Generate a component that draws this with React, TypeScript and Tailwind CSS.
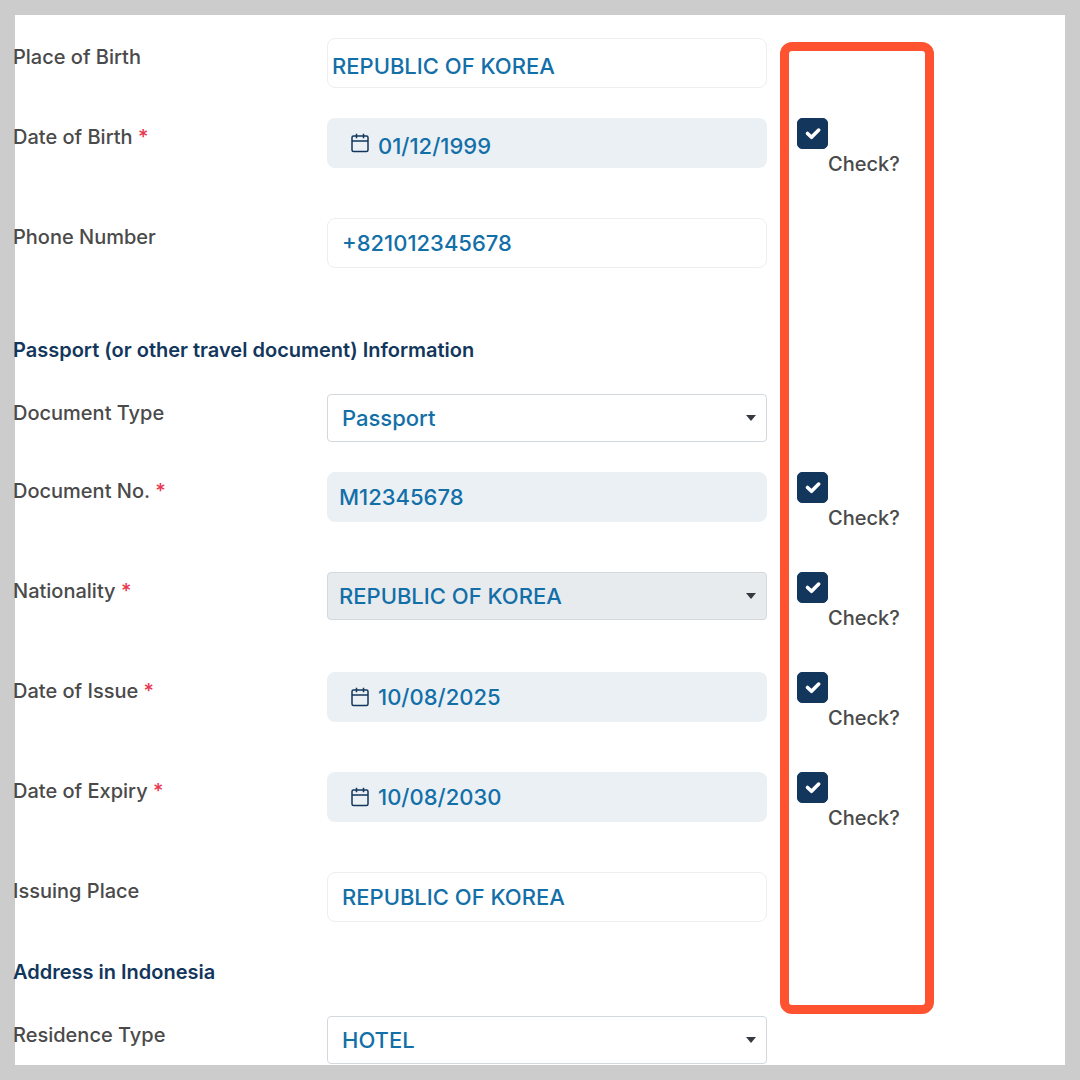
import React, { useState } from "react";
import clsx from "clsx";

type FieldKind = "text" | "date" | "select";

interface Field {
  id: string;
  label: string;
  kind: FieldKind;
  value: string;
  options?: string[];
  required?: boolean;
  locked?: boolean;
  compact?: boolean;
}

interface Section {
  title?: string;
  fields: Field[];
}

const COLUMNS = "grid grid-cols-[314fr_440fr_298fr]";

const sections: Section[] = [
  {
    fields: [
      { id: "birthPlace", label: "Place of Birth", kind: "text", value: "REPUBLIC OF KOREA", compact: true },
      { id: "birthDate", label: "Date of Birth", kind: "date", value: "01/12/1999", required: true, locked: true, compact: true },
      { id: "phone", label: "Phone Number", kind: "text", value: "+821012345678" },
    ],
  },
  {
    title: "Passport (or other travel document) Information",
    fields: [
      { id: "docType", label: "Document Type", kind: "select", value: "Passport", options: ["Passport"] },
      { id: "docNo", label: "Document No.", kind: "text", value: "M12345678", required: true, locked: true },
      {
        id: "nationality",
        label: "Nationality",
        kind: "select",
        value: "REPUBLIC OF KOREA",
        options: ["REPUBLIC OF KOREA"],
        required: true,
        locked: true,
      },
      { id: "issueDate", label: "Date of Issue", kind: "date", value: "10/08/2025", required: true, locked: true },
      { id: "expiryDate", label: "Date of Expiry", kind: "date", value: "10/08/2030", required: true, locked: true },
      { id: "issuePlace", label: "Issuing Place", kind: "text", value: "REPUBLIC OF KOREA" },
    ],
  },
  {
    title: "Address in Indonesia",
    fields: [{ id: "residence", label: "Residence Type", kind: "select", value: "HOTEL", options: ["HOTEL"] }],
  },
];

const CalendarIcon = () => (
  <svg viewBox="0 0 18 20" className="w-[18px] h-5 shrink-0" fill="none" stroke="#12365c" strokeWidth="1.5">
    <rect x="1" y="3" width="16" height="15.5" rx="1.5" />
    <path d="M1 8h16M5.5 0.8v4.4M12.5 0.8v4.4" />
  </svg>
);

const Control: React.FC<{ field: Field }> = ({ field }) => {
  const [value, setValue] = useState(field.value);
  const { id, kind, locked, compact, options } = field;

  if (kind === "select") {
    return (
      <div className="relative">
        <select
          id={id}
          value={value}
          disabled={locked}
          onChange={(e) => setValue(e.target.value)}
          className={clsx(
            "block w-full h-12 pr-8 rounded-[4px] border border-[#d3d8dd] appearance-none text-[#126fa8] opacity-100",
            locked ? "bg-[#e8ebee] pl-[11px]" : "bg-white pl-3.5"
          )}
        >
          {options?.map((option) => (
            <option key={option}>{option}</option>
          ))}
        </select>
        {/* caret */}
        <svg viewBox="0 0 10 6" className="absolute right-[11px] top-[21px] w-2.5 h-1.5 pointer-events-none">
          <path d="M0 0h10L5 6z" fill="#343a40" />
        </svg>
      </div>
    );
  }

  if (kind === "date") {
    return (
      <div className="flex items-center w-full h-[50px] gap-[9px] pl-6 rounded-lg bg-[#ebf0f4]">
        <CalendarIcon />
        <input
          id={id}
          type="text"
          value={value}
          readOnly={locked}
          onChange={(e) => setValue(e.target.value)}
          className={clsx("flex-1 min-w-0 h-full bg-transparent outline-none", compact && "pt-1.5")}
        />
      </div>
    );
  }

  return (
    <input
      id={id}
      type="text"
      value={value}
      readOnly={locked}
      onChange={(e) => setValue(e.target.value)}
      className={clsx(
        "block w-full h-[50px] rounded-lg border outline-none",
        locked ? "bg-[#ebf0f4] border-[#ebf0f4] pl-[11px]" : "bg-white border-[#edeeef]",
        !locked && (compact ? "pl-1 pt-1.5" : "pl-3.5")
      )}
    />
  );
};

const CheckBox: React.FC<{ id: string }> = ({ id }) => {
  const [checked, setChecked] = useState(true);
  return (
    <div className="h-[70px] pl-[30px]">
      <div className="relative size-[31px]">
        <input
          id={`${id}-check`}
          type="checkbox"
          checked={checked}
          onChange={(e) => setChecked(e.target.checked)}
          className="block size-full rounded-[5px] appearance-none border border-[#12365c] checked:bg-[#12365c]"
        />
        {checked && (
          <svg viewBox="0 0 31 31" className="absolute inset-0 pointer-events-none" fill="none">
            <path
              d="M10.5 15.5l4 3.8 7.2-7.2"
              stroke="#fff"
              strokeWidth="3.6"
              strokeLinecap="round"
              strokeLinejoin="round"
            />
          </svg>
        )}
      </div>
      <label htmlFor={`${id}-check`} className="block ml-[31px] leading-[30px]">
        Check?
      </label>
    </div>
  );
};

const FormRow: React.FC<{ field: Field }> = ({ field }) => (
  <div className={COLUMNS}>
    <label htmlFor={field.id} className="pt-1 leading-[31px]">
      {field.label}
      {field.required && <span className="text-[#e8384f]"> *</span>}
    </label>
    <div className="text-[22px] font-medium text-[#126fa8]">
      <Control field={field} />
    </div>
    {field.required && <CheckBox id={field.id} />}
  </div>
);

export default function App() {
  return (
    <div className="min-h-screen p-[15px] bg-[#cccccc]">
      <main className="bg-white pt-[23px] pb-px">
        <form className="relative flex flex-col gap-[30px] -ml-0.5 font-['Inter',sans-serif] text-[20px] font-medium text-[#4a4a4a]">
          {sections.map((section, idx) => (
            <React.Fragment key={idx}>
              {section.title && (
                <h2
                  className={clsx(
                    "font-semibold leading-7 text-[#12365c]",
                    idx === 1 ? "pt-[38px]" : "pt-1.5"
                  )}
                >
                  {section.title}
                </h2>
              )}
              {section.fields.map((field) => (
                <FormRow key={field.id} field={field} />
              ))}
            </React.Fragment>
          ))}

          {/* highlight over the check column */}
          <div className={clsx(COLUMNS, "absolute inset-x-0 top-1 bottom-[50px] pointer-events-none")}>
            <div className="col-start-3 w-[154px] ml-[13px] rounded-xl border-[9px] border-[#ff5230]" />
          </div>
        </form>
      </main>
    </div>
  );
}
